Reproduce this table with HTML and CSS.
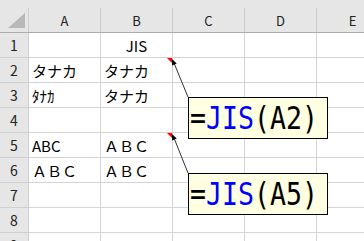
FILE: index.html
```html
<!DOCTYPE html>
<html lang="ja">
<head>
<meta charset="utf-8">
<link rel="stylesheet" href="styles.css">
</head>
<body>
<div class="sheet">
  <div class="hrow">
    <div class="corner"><span class="tri"></span></div>
    <div class="ch">A</div>
    <div class="ch">B</div>
    <div class="ch">C</div>
    <div class="ch">D</div>
    <div class="ch">E</div>
  </div>
  <div class="row"><div class="rh">1</div><div class="c"></div><div class="c ctr">JIS</div><div class="c"></div><div class="c"></div><div class="c"></div></div>
  <div class="row"><div class="rh">2</div><div class="c">タナカ</div><div class="c">タナカ</div><div class="c"></div><div class="c"></div><div class="c"></div></div>
  <div class="row"><div class="rh">3</div><div class="c">ﾀﾅｶ</div><div class="c">タナカ</div><div class="c"></div><div class="c"></div><div class="c"></div></div>
  <div class="row"><div class="rh">4</div><div class="c"></div><div class="c"></div><div class="c"></div><div class="c"></div><div class="c"></div></div>
  <div class="row"><div class="rh">5</div><div class="c">ABC</div><div class="c">ＡＢＣ</div><div class="c"></div><div class="c"></div><div class="c"></div></div>
  <div class="row"><div class="rh">6</div><div class="c">ＡＢＣ</div><div class="c">ＡＢＣ</div><div class="c"></div><div class="c"></div><div class="c"></div></div>
  <div class="row"><div class="rh">7</div><div class="c"></div><div class="c"></div><div class="c"></div><div class="c"></div><div class="c"></div></div>
  <div class="row"><div class="rh">8</div><div class="c"></div><div class="c"></div><div class="c"></div><div class="c"></div><div class="c"></div></div>
  <div class="row"><div class="rh">9</div><div class="c"></div><div class="c"></div><div class="c"></div><div class="c"></div><div class="c"></div></div>

  <svg class="overlay" width="364" height="241" viewBox="0 0 364 241">
    <polygon points="167,58 172,58 172,63" fill="#ff0000"/>
    <line x1="174" y1="63" x2="188" y2="97" stroke="#333" stroke-width="1"/>
    <polygon points="172,59 176.7,63.5 172.1,65.5" fill="#000"/>
    <polygon points="167,133 172,133 172,138" fill="#ff0000"/>
    <line x1="174" y1="138" x2="188" y2="173" stroke="#333" stroke-width="1"/>
    <polygon points="172,134 176.7,138.5 172.1,140.5" fill="#000"/>
  </svg>

  <div class="note n1"><span class="f">=<span class="fn">JIS</span>(A2)</span></div>
  <div class="note n2"><span class="f">=<span class="fn">JIS</span>(A5)</span></div>
</div>
</body>
</html>
```

FILE: styles.css
```css
html, body {
  margin: 0;
  padding: 0;
}
body {
  width: 364px;
  height: 241px;
  overflow: hidden;
  background: #ffffff;
  font-family: "Noto Sans CJK JP", "Noto Sans", sans-serif;
  color: #000;
}
.sheet {
  position: relative;
  width: 364px;
  height: 241px;
  overflow: hidden;
}
.hrow {
  display: flex;
  height: 33px;
  box-sizing: border-box;
  background: #e6e6e6;
  border-bottom: 1px solid #ababab;
}
.corner {
  width: 29px;
  flex: none;
  margin-top: 8px;
  box-sizing: border-box;
  border-right: 1px solid #cfcfcf;
  display: flex;
  justify-content: flex-end;
  align-items: flex-end;
  padding: 0 3px 4px 0;
}
.tri {
  width: 0;
  height: 0;
  border-left: 17px solid transparent;
  border-bottom: 15px solid #b8b8b8;
}
.ch {
  width: 72px;
  flex: none;
  margin-top: 8px;
  box-sizing: border-box;
  border-right: 1px solid #cfcfcf;
  display: flex;
  align-items: center;
  justify-content: center;
  font-size: 13px;
  color: #222;
}
.row {
  display: flex;
  height: 25px;
}
.rh {
  width: 29px;
  flex: none;
  box-sizing: border-box;
  background: #e6e6e6;
  border-right: 1px solid #cfcfcf;
  border-bottom: 1px solid #cfcfcf;
  display: flex;
  align-items: center;
  justify-content: center;
  font-size: 14px;
  color: #222;
}
.c {
  width: 72px;
  flex: none;
  box-sizing: border-box;
  border-right: 1px solid #d4d4d4;
  border-bottom: 1px solid #d4d4d4;
  display: flex;
  align-items: center;
  padding-left: 3px;
  font-size: 15px;
  white-space: nowrap;
}
.ctr {
  justify-content: center;
  padding-left: 0;
}
.overlay {
  position: absolute;
  left: 0;
  top: 0;
  pointer-events: none;
}
.note {
  position: absolute;
  left: 188px;
  width: 140px;
  height: 42px;
  box-sizing: border-box;
  border: 1px solid #000;
  background: #ffffe1;
  font-family: "DejaVu Sans Mono", monospace;
  font-size: 32px;
  line-height: 40px;
  padding-left: 1px;
  white-space: nowrap;
  color: #000;
}
.n1 { top: 97px; }
.n2 { top: 173px; }
.f {
  display: inline-block;
  transform: scaleX(0.83);
  transform-origin: 0 50%;
}
.fn {
  color: #0000ff;
}
```
